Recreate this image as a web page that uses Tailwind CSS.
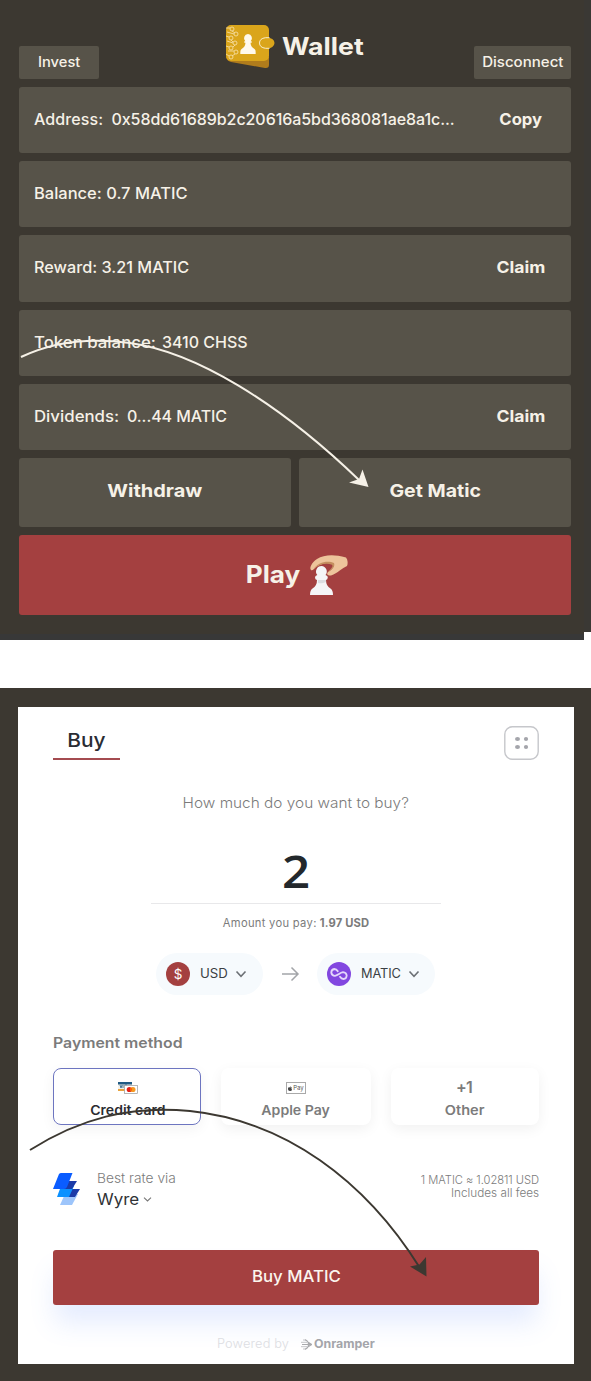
<!DOCTYPE html>
<html lang="en">
<head>
<meta charset="utf-8">
<meta name="viewport" content="width=device-width, initial-scale=1">
<title>Wallet</title>
<script src="https://cdn.jsdelivr.net/npm/@tailwindcss/browser@4"></script>
</head>
<body class="w-[591px] bg-white font-['Inter','Open_Sans',sans-serif] whitespace-nowrap">

<!-- Wallet panel -->
<section class="relative h-[640px]">
  <div class="absolute inset-x-0 top-0 h-[632px] bg-[#3a3834]"></div>
  <div class="absolute left-0 top-0 h-[640px] w-[584px] bg-[#383838]"></div>
  <div class="absolute left-0 top-0 h-[634px] w-[584px] bg-[#3c3831]"></div>

  <div class="relative flex flex-col pr-5 pl-[19px] text-[#f6f1e7]">
    <header class="flex h-[79px] items-end justify-between">
      <button class="h-[33px] w-20 rounded-[2px] bg-[#575349] pb-[2px] text-sm font-medium"><span class="inline-block scale-x-[1.05]">Invest</span></button>
      <div class="flex h-[79px] w-[140px] translate-x-[9px] items-start gap-[8px] pt-[24px]">
        <svg class="h-[46px] w-[49px] shrink-0" viewBox="0 0 49 46">
          <path d="M0 33 L43 33 V41 Q43 44.500 39 44 L5 38 Q1 37 0 33Z" fill="#b07c1c"/>
          <rect x="0" y="1" width="43" height="36" rx="5" fill="#daa51b"/>
          <ellipse cx="41" cy="19" rx="7.500" ry="5.500" fill="#daa51b"/>
          <path d="M43.500 13.700H39.500Q33.500 14.500 33.500 19T39.500 24.300H43.500" fill="none" stroke="#f9edc8" stroke-width="1"/>
          <g fill="none" stroke="#f5dda0" stroke-width=".9">
            <circle cx="6" cy="5" r="2"/><circle cx="10" cy="10" r="2"/><circle cx="5" cy="14" r="2"/>
            <circle cx="9" cy="19" r="2"/><circle cx="5" cy="24" r="2"/><circle cx="10" cy="28" r="2"/><circle cx="5" cy="33" r="2"/>
            <path d="M0 4h4M1 8l7 2M0 12l3 1M1 17l6 2M0 22l3 1M2 27h6M0 30l3 2M6 7l3 2M5 16l2 2M9 21l-2 2M9 30l-3 2"/>
          </g>
          <path d="M22 10a4.200 4.200 0 0 1 2.700 7.200h1v1.600h-1.200c.2 3.200 1.500 4.600 4 6.200 1.100.800 1.200 1.700 1.200 5H14.300c0-3.300.200-4.200 1.300-5 2.500-1.600 3.700-3 3.900-6.200h-1.200v-1.600h1A4.200 4.200 0 0 1 22 10Z" fill="#fff9ec"/>
        </svg>
        <h1 class="mt-[7px] -ml-px origin-left scale-x-[1.11] text-2xl leading-8 font-bold">Wallet</h1>
      </div>
      <button class="h-[33px] w-[97px] rounded-[2px] bg-[#575349] pb-[2px] text-sm font-medium"><span class="inline-block scale-x-[1.075]">Disconnect</span></button>
    </header>

    <div class="mt-2 flex flex-col gap-2 text-base font-medium">
      <div class="flex h-[66.2px] items-center rounded-[3px] bg-[#575349] pr-[29px] pb-[3px] pl-[15px]">
        <span class="w-[77.5px] tracking-[0.1px]">Address:</span><span class="tracking-[-0.06px]">0x58dd61689b2c20616a5bd368081ae8a1c...</span>
        <button class="ml-auto origin-right scale-x-[1.04] font-bold">Copy</button>
      </div>
      <div class="flex h-[66.2px] items-center rounded-[3px] bg-[#575349] pr-[26px] pb-[2px] pl-[15px]">
        <span class="origin-left scale-x-[1.03]">Balance: 0.7 MATIC</span>
      </div>
      <div class="flex h-[66.2px] items-center rounded-[3px] bg-[#575349] pr-[26px] pb-[3px] pl-[15px]">
        <span class="origin-left scale-x-[1.015]">Reward: 3.21 MATIC</span>
        <button class="ml-auto origin-right scale-x-[1.1] font-bold">Claim</button>
      </div>
      <div class="flex h-[66.2px] items-center rounded-[3px] bg-[#575349] pr-[26px] pb-[2px] pl-[15px]">
        <span class="w-[128px]"><span class="inline-block origin-left scale-x-[1.05]">Token balance:</span></span><span>3410 CHSS</span>
      </div>
      <div class="flex h-[66.2px] items-center rounded-[3px] bg-[#575349] pr-[26px] pb-[2px] pl-[15px]">
        <span class="w-[93px]"><span class="inline-block origin-left scale-x-[1.05]">Dividends:</span></span><span class="tracking-[-0.07px]">0...44 MATIC</span>
        <button class="ml-auto origin-right scale-x-[1.1] font-bold">Claim</button>
      </div>
      <div class="grid h-[69px] grid-cols-2 gap-2 text-lg font-bold">
        <button class="rounded-[3px] bg-[#575349] pb-[2px]"><span class="inline-block scale-x-[1.11]">Withdraw</span></button>
        <button class="rounded-[3px] bg-[#575349] pb-[2px]"><span class="inline-block scale-x-[1.085]">Get Matic</span></button>
      </div>
      <button class="flex h-20 items-center justify-center gap-[10px] rounded-[3px] bg-[#a44040] pl-[7px] text-2xl font-bold">
        <span class="scale-x-[1.09]">Play</span>
        <svg class="h-[42px] w-[40px]" viewBox="0 0 40 42">
          <path d="M2 16C0 14 3 8 8 5C15 1 24 0 37 3.500C39 6 39 10 38 12C33 14 29 19 22 21.500C19 22 17 20 19 18C22 16 25 14 25 10C20 8 11 9 5 15Q3 17 2 16Z" fill="#edc49b"/>
          <path d="M5 14.500C9 8 19 6 25 9C26.500 12 23 16 19 18C22 15 24.500 12.500 23 10.800C17 8.500 10 10.500 5 14.500Z" fill="#c48f5f"/>
          <path d="M12.500 12a5.500 5.500 0 0 1 4 9q2.500.500 2.300 2.500T17 26q0 6 4.500 8.500Q24 36 24 41H1q0-5 2.500-6.500Q8 32 8 26q-2-.5-2-2.500T8.300 21a5.500 5.500 0 0 1 4.200-9Z" fill="#f5f5f7"/>
          <path d="M9 26h8v2q-4 2-8 1Z" fill="#dcdde1"/>
        </svg>
      </button>
    </div>
  </div>

  <svg class="absolute left-0 top-0 h-[640px] w-[584px]" viewBox="0 0 584 640">
    <path d="M21 357C50 343 86 337 130 343C195 352 278 402 359 480" fill="none" stroke="#f6f1e7" stroke-width="2"/>
    <path d="M368.500 487L362.500 469.500L359 479L349 482.500Z" fill="#f6f1e7"/>
  </svg>
</section>

<!-- Purchase panel -->
<section class="relative mt-12 h-[693px] bg-[#3c3831] pt-[19px] pr-[17px] pl-[18px]">
  <div class="flex h-[657px] flex-col overflow-hidden bg-white px-[35px] text-[#7b7b7b]">
    <header class="flex h-[53px] items-end justify-between">
      <div class="flex h-[34px] w-[67px] items-start justify-center border-b-2 border-[#a44b50] text-[19px] leading-[30px] font-medium text-[#2a2c33]"><span class="inline-block scale-x-[1.1]">Buy</span></div>
      <svg class="h-[34px] w-[35px]" viewBox="0 0 35 34">
        <rect x=".8" y=".8" width="33.400" height="32.400" rx="7.500" fill="none" stroke="#c6c7cb" stroke-width="1.400"/>
        <g fill="#a4a5ab"><ellipse cx="13.500" cy="13" rx="2.500" ry="2"/><ellipse cx="22" cy="13" rx="2.100" ry="2"/><ellipse cx="13.500" cy="21" rx="2.500" ry="2"/><ellipse cx="22" cy="21" rx="2.100" ry="2"/></g>
      </svg>
    </header>

    <div class="mt-[33px] text-center text-[14.5px] leading-5 font-light"><span class="inline-block scale-x-[1.06]">How much do you want to buy?</span></div>
    <div class="mx-auto mt-[31px] h-[60px] w-[290px] border-b border-[#e8e8ea] text-center font-['Open_Sans'] text-[46px] leading-[53px] font-semibold text-[#23282c]"><span class="inline-block scale-x-[1.07]">2</span></div>
    <div class="mt-[11px] text-center text-[11.2px] leading-4"><span class="tracking-[0.3px]">Amount you pay:</span> <b class="tracking-[0.15px]">1.97 USD</b></div>

    <div class="mt-[22px] flex h-[42px] items-center pl-[103px] text-[12.8px] text-[#3b3f44]">
      <div class="flex h-[42px] w-[107px] items-center rounded-full bg-[#f6fafd] pl-[10px]">
        <span class="flex size-6 items-center justify-center rounded-full bg-[#a44040] text-[13.5px] text-white">$</span>
        <span class="ml-[10px] w-[35px] origin-left scale-x-[1.03]">USD</span>
        <svg class="size-3" viewBox="0 0 12 12"><path d="M1.500 3.500L6 8.300L10.500 3.500" fill="none" stroke="#6c7075" stroke-width="1.600"/></svg>
      </div>
      <svg class="ml-[18px] h-4 w-[19px]" viewBox="0 0 19 16"><path d="M1 8H17M10.500 1.500L17 8L10.500 14.500" fill="none" stroke="#a3a5a9" stroke-width="1.500"/></svg>
      <div class="ml-[17px] flex h-[42px] w-[118px] items-center rounded-full bg-[#f6fafd] pl-[10px]">
        <svg class="size-6" viewBox="0 0 24 24">
          <circle cx="12" cy="12" r="12" fill="#8247e0"/>
          <path d="M10.800 9.300Q9.500 7 7.300 7Q4.200 7.500 4.300 10.700Q5 13.900 8 13.800Q9.800 13.500 12 12T16 10.200Q19.400 10.500 19.700 13.500Q19.500 16.800 16.500 17Q14.300 17 13 14.800" fill="none" stroke="#e5d7fb" stroke-width="1.800" stroke-linejoin="round" stroke-linecap="round"/>
        </svg>
        <span class="ml-[10px] w-[47px] tracking-[-0.1px]">MATIC</span>
        <svg class="size-3" viewBox="0 0 12 12"><path d="M1.500 3.500L6 8.300L10.500 3.500" fill="none" stroke="#6c7075" stroke-width="1.600"/></svg>
      </div>
    </div>

    <h2 class="mt-[38px] origin-left scale-x-[1.1] text-[14.4px] leading-5 font-semibold">Payment method</h2>
    <div class="mt-[15px] flex h-[57px] justify-between text-[13px] font-semibold">
      <div class="flex w-[148px] flex-col items-center rounded-lg border border-[#6d75c0] pt-[12px] text-[#2b2c31] shadow-[0_4px_14px_rgba(0,0,0,0.05)]">
        <svg class="ml-[2px] h-[13px] w-5" viewBox="0 0 20 13">
          <rect x="0" y="1" width="14" height="9" fill="#f2f1ec"/><path d="M0 1h14v2.500H0z" fill="#205a83"/><path d="M0 8h7v2H0z" fill="#e8a33d"/>
          <path d="M2 4l1 3 1-3M5 4v3M7 4h2M7 7h2" stroke="#205a83" fill="none" stroke-width=".8"/>
          <rect x="6.500" y="4.500" width="13" height="8" fill="#fff" stroke="#999" stroke-width=".7"/>
          <circle cx="11.300" cy="8.500" r="2.600" fill="#e2231a"/><circle cx="14.900" cy="8.500" r="2.600" fill="#f59a23"/><path d="M13.100 6.600a2.600 2.600 0 0 1 0 3.800a2.600 2.600 0 0 1 0-3.800" fill="#ff5f00"/>
        </svg>
        <span class="mt-[6px] scale-x-[1.08] pl-px leading-5">Credit card</span>
      </div>
      <div class="flex w-[150px] flex-col items-center rounded-lg bg-white pt-[14px] shadow-[0_4px_14px_rgba(0,0,0,0.06)]">
        <div class="flex h-3 w-5 items-center justify-center gap-px border border-[#a9a9a9] text-[6px] leading-none font-normal text-[#555]">
          <svg class="h-[5px] w-1" viewBox="0 0 8 10"><path d="M4 3C5 2 7 2 7.800 3.200C6.500 4.300 6.600 6.300 8 7C7 10 5.500 10.500 4 9.500C1 11 -1 6 .5 3.500C1.500 2 3 2.500 4 3ZM4 2Q4 .3 5.700 0Q5.800 1.700 4 2Z" fill="#444"/></svg>Pay
        </div>
        <span class="mt-[6px] scale-x-[1.085] leading-5">Apple Pay</span>
      </div>
      <div class="flex w-[148px] flex-col items-center rounded-lg bg-white pt-[9px] shadow-[0_4px_14px_rgba(0,0,0,0.06)]">
        <span class="pr-[2px] text-base leading-5 tracking-[-0.7px]">+1</span>
        <span class="mt-[3px] scale-x-[1.12] pr-px leading-5">Other</span>
      </div>
    </div>

    <div class="mt-[43px] flex h-[38px]">
      <svg class="mt-[5px] h-8 w-[27px]" viewBox="0 0 27 32">
        <path d="M12 21h13l-6 11H7Z" fill="#9dc5fb"/>
        <path d="M13 16h14l-5 8H9Z" fill="#1b3aa8"/>
        <path d="M8 13h13l-5 11H4Z" fill="#0a90ff"/>
        <path d="M12 8h12l-5 8H7Z" fill="#1b3aa8"/>
        <path d="M6 1Q7 0 8 0H19.500L14 14Q13 16 11 16H0Z" fill="#0a5cff"/>
      </svg>
      <div class="ml-[17px] flex flex-col items-start">
        <span class="origin-left scale-x-[1.06] text-[13px] leading-[20px] font-light">Best rate via</span>
        <span class="mt-px flex items-center gap-[6px] text-base leading-[21px] text-[#303236]"><span class="origin-left scale-x-[1.06]">Wyre</span>
          <svg class="size-[9px]" viewBox="0 0 9 9"><path d="M1 2.700L4.500 6L8 2.700" fill="none" stroke="#777" stroke-width="1.100"/></svg>
        </span>
      </div>
      <div class="ml-auto pt-[6px] text-right text-[11.2px] leading-[13px] font-light"><div class="tracking-[-0.05px]">1 MATIC ≈ 1.02811 USD</div><div class="origin-right scale-x-[1.05]">Includes all fees</div></div>
    </div>

    <button class="mt-[44px] h-[55px] shrink-0 rounded-[3px] bg-[#a44040] pb-[3px] text-base font-medium text-[#fbf5ee] shadow-[0_20px_26px_-2px_rgba(80,130,245,0.15)]"><span class="inline-block scale-x-[1.05]">Buy MATIC</span></button>

    <footer class="mt-[30px] flex h-[18px] items-center pl-[164px]">
      <span class="w-[84px] text-[12.8px] font-light tracking-[0.15px] text-[#dcdde2]">Powered by</span>
      <svg class="h-[11px] w-[11px]" viewBox="0 0 11 11"><path d="M2 1h3M0 3.300h6M0 7.700h6M2 10h3" fill="none" stroke="#c4c5c9" stroke-width="1"/><path d="M1 5.500h9M4 .8Q7.500 2 7.500 5.500T4 10.200M7.500 3.500l3 2L7.500 7.500" fill="none" stroke="#a8a9ac" stroke-width="1.200"/></svg>
      <span class="ml-[2px] origin-left scale-x-[1.03] text-[12px] font-bold text-[#a4a5aa]">Onramper</span>
    </footer>
  </div>
  <svg class="absolute left-0 top-0 h-[693px] w-[591px]" viewBox="0 688 591 693">
    <path d="M30 1150C79 1119 130 1105 190 1111C285 1121 365 1180 420 1268" fill="none" stroke="#3c3831" stroke-width="2"/>
    <path d="M426.500 1276.500L426 1257L419.500 1264.500L410 1266.500Z" fill="#3c3831"/>
  </svg>
</section>
</body>
</html>
